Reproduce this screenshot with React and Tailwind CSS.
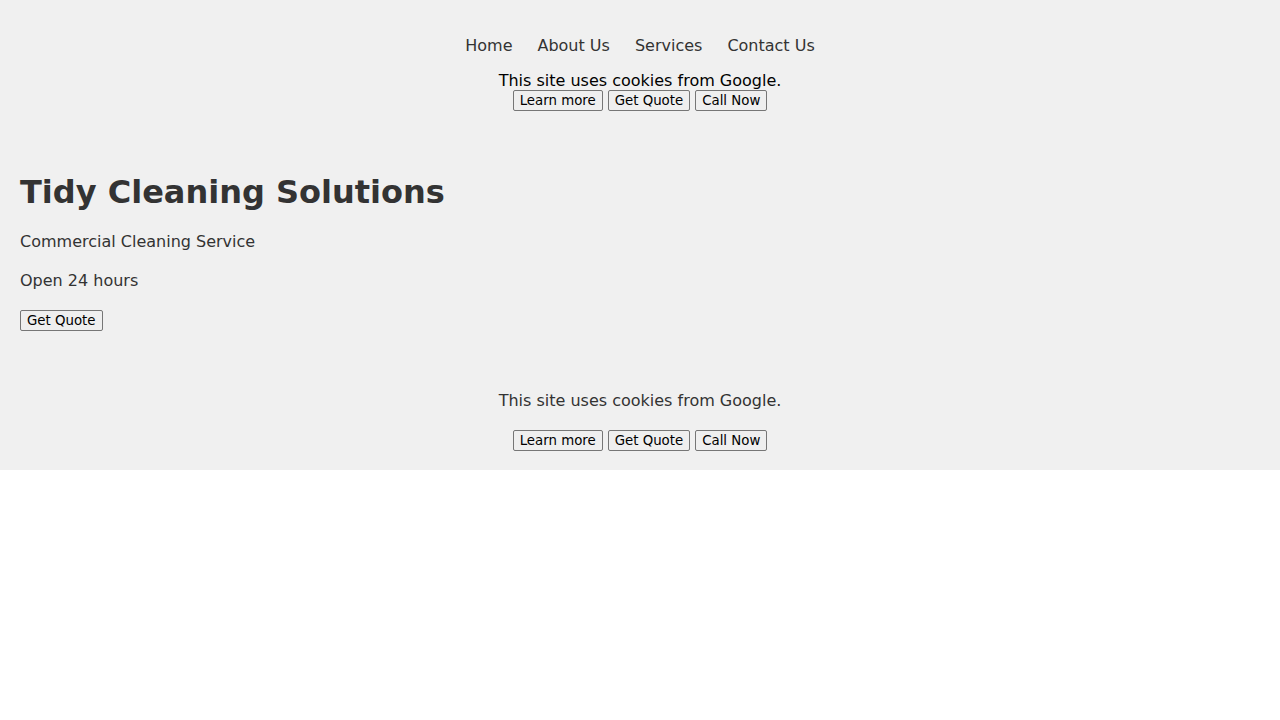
import React from 'react';

function Btn({ children }) {
  return (
    <button className="h-[21px] px-[6px] border border-[#767676] rounded-[2px] bg-[#efefef] text-[13.33px] leading-[15px] font-normal text-black">
      {children}
    </button>
  );
}

function CookieButtons() {
  return (
    <div className="flex justify-center gap-[5px]">
      <Btn>Learn more</Btn>
      <Btn>Get Quote</Btn>
      <Btn>Call Now</Btn>
    </div>
  );
}

export default function App() {
  const links = ['Home', 'About Us', 'Services', 'Contact Us'];
  return (
    <div className="font-['DejaVu_Sans',sans-serif] text-[#333] bg-white min-h-[720px]">
      <div className="bg-[#f0f0f0] pb-[19px]">
        {/* Header */}
        <header className="pt-[36px]">
          <nav className="flex justify-center gap-[25px] text-base leading-[19px]">
            {links.map((l) => (
              <a key={l} href="#" className="text-[#333]">{l}</a>
            ))}
          </nav>
          <div className="mt-[16px] text-center text-black">
            <p className="text-base leading-[19px]">This site uses cookies from Google.</p>
            <CookieButtons />
          </div>
        </header>

        {/* Hero */}
        <section className="px-[20px] pt-[62px]">
          <h1 className="text-[32px] font-bold leading-[38px]">Tidy Cleaning Solutions</h1>
          <p className="mt-[21px] text-base leading-[19px]">Commercial Cleaning Service</p>
          <p className="mt-[20px] text-base leading-[19px]">Open 24 hours</p>
          <div className="mt-[18px]">
            <Btn>Get Quote</Btn>
          </div>
        </section>

        {/* Footer cookie notice */}
        <footer className="pt-[59px] text-center">
          <p className="text-base leading-[19px]">This site uses cookies from Google.</p>
          <div className="mt-[20px]">
            <CookieButtons />
          </div>
        </footer>
      </div>
    </div>
  );
}
